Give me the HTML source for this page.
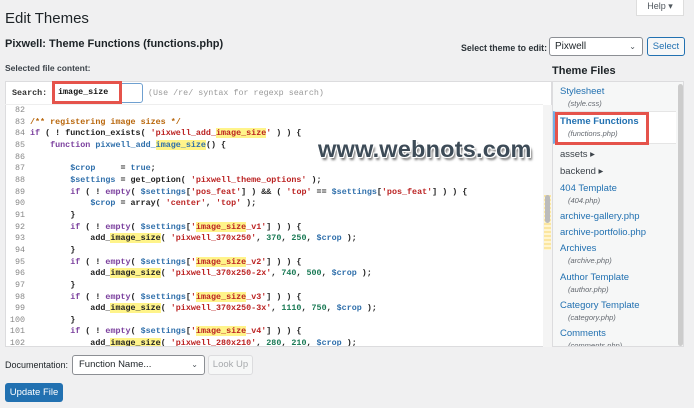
<!DOCTYPE html>
<html><head><meta charset="utf-8"><style>
*{margin:0;padding:0;box-sizing:border-box}
body{width:694px;height:408px;background:#f0f0f1;font-family:"Liberation Sans",sans-serif;color:#1d2327;position:relative;overflow:hidden}
.a{position:absolute;white-space:nowrap}
.code{font-family:"Liberation Mono",monospace;font-size:8.4px;font-weight:bold;line-height:11.65px}
pre.code{white-space:pre}
.ln{color:#888;font-weight:normal;text-align:right;width:20px}
.k{color:#7a3e9d}.c{color:#b8660b}.s{color:#b22}.v{color:#2f6fab}.n{color:#1a7a55}.f{color:#2f6fab}.h{background:#fff48a}
.fl{color:#2271b1;font-size:9.5px}
.fn{color:#646970;font-size:7.5px;font-style:italic}
</style></head><body>
<div class="a" style="left:636px;top:-2px;width:48px;height:18px;background:#fff;border:1px solid #ddd;border-top:none;font-size:9px;color:#50575e;text-align:center;line-height:16px">Help ▾</div>
<div class="a" style="left:5px;top:10px;font-size:15px;color:#1d2327">Edit Themes</div>
<div class="a" style="left:5px;top:38px;font-size:11px;font-weight:bold">Pixwell: Theme Functions (functions.php)</div>
<div class="a" style="left:5px;top:63px;font-size:8.5px;font-weight:bold;color:#3c434a">Selected file content:</div>
<div class="a" style="left:461px;top:43px;font-size:8.8px;font-weight:bold;color:#2c3338">Select theme to edit:</div>
<div class="a" style="left:549px;top:37px;width:94px;height:19px;background:#fff;border:1px solid #8c8f94;border-radius:3px;font-size:10px;line-height:17px;padding-left:5px">Pixwell<span style="position:absolute;right:6px;color:#50575e;font-size:8px">⌄</span></div>
<div class="a" style="left:647px;top:37px;width:38px;height:19px;background:#f6f7f7;border:1px solid #2271b1;border-radius:3px;font-size:9.5px;color:#2271b1;text-align:center;line-height:17px">Select</div>
<div class="a" style="left:552px;top:65px;font-size:11px;font-weight:bold;color:#1d2327">Theme Files</div>

<div class="a" style="left:5px;top:81px;width:547px;height:266px;background:#fff;border:1px solid #dcdcde"></div>
<div class="a" style="left:5px;top:104px;width:538px;height:1px;background:#eee"></div>
<div class="a code" style="left:12px;top:88px;color:#333">Search:</div>
<div class="a" style="left:52px;top:83px;width:91px;height:20px;border:1px solid #6fa0d0;border-radius:3px;background:#fff"></div>
<div class="a" style="left:52px;top:81px;width:70px;height:23px;border:3px solid #e5534b"></div>
<div class="a code" style="left:58px;top:87px;color:#111">image_size</div>
<div class="a code" style="left:148px;top:88px;color:#999;font-weight:normal">(Use /re/ syntax for regexp search)</div>
<div class="a" style="left:543px;top:105px;width:9px;height:242px;background:#f4f4f4"></div>
<div class="a" style="left:544px;top:195px;width:7px;height:55px;background:repeating-linear-gradient(#fbe6a0 0 2px,#fff5d0 2px 4px)"></div>
<div class="a" style="left:545px;top:195px;width:5px;height:28px;background:#bbb;border-radius:3px"></div>

<div class="a code" style="left:5px;top:105px">
<div class="ln">82<br>83<br>84<br>85<br>86<br>87<br>88<br>89<br>90<br>91<br>92<br>93<br>94<br>95<br>96<br>97<br>98<br>99<br>100<br>101<br>102</div>
</div>
<div class="a" style="left:30px;top:105px;width:512px;height:241px;overflow:hidden">
<pre class="code" style="color:#222">&#32;
<span class="c">/** registering image sizes */</span>
<span class="k">if</span> ( ! function_exists( <span class="s">'pixwell_add_<span class="h">image_size</span>'</span> ) ) {
    <span class="k">function</span> <span class="f">pixwell_add_<span class="h">image_size</span></span>() {

        <span class="v">$crop</span>     = <span class="v">true</span>;
        <span class="v">$settings</span> = get_option( <span class="s">'pixwell_theme_options'</span> );
        <span class="k">if</span> ( ! <span class="k">empty</span>( <span class="v">$settings</span>[<span class="s">'pos_feat'</span>] ) &amp;&amp; ( <span class="s">'top'</span> == <span class="v">$settings</span>[<span class="s">'pos_feat'</span>] ) ) {
            <span class="v">$crop</span> = array( <span class="s">'center'</span>, <span class="s">'top'</span> );
        }
        <span class="k">if</span> ( ! <span class="k">empty</span>( <span class="v">$settings</span>[<span class="s">'<span class="h">image_size</span>_v1'</span>] ) ) {
            add_<span class="h">image_size</span>( <span class="s">'pixwell_370x250'</span>, <span class="n">370</span>, <span class="n">250</span>, <span class="v">$crop</span> );
        }
        <span class="k">if</span> ( ! <span class="k">empty</span>( <span class="v">$settings</span>[<span class="s">'<span class="h">image_size</span>_v2'</span>] ) ) {
            add_<span class="h">image_size</span>( <span class="s">'pixwell_370x250-2x'</span>, <span class="n">740</span>, <span class="n">500</span>, <span class="v">$crop</span> );
        }
        <span class="k">if</span> ( ! <span class="k">empty</span>( <span class="v">$settings</span>[<span class="s">'<span class="h">image_size</span>_v3'</span>] ) ) {
            add_<span class="h">image_size</span>( <span class="s">'pixwell_370x250-3x'</span>, <span class="n">1110</span>, <span class="n">750</span>, <span class="v">$crop</span> );
        }
        <span class="k">if</span> ( ! <span class="k">empty</span>( <span class="v">$settings</span>[<span class="s">'<span class="h">image_size</span>_v4'</span>] ) ) {
            add_<span class="h">image_size</span>( <span class="s">'pixwell_280x210'</span>, <span class="n">280</span>, <span class="n">210</span>, <span class="v">$crop</span> );</pre>
</div>

<div class="a" style="left:318px;top:136px;font-size:23.5px;font-weight:bold;color:#3d4b57;letter-spacing:0.2px;text-shadow:1px 1px 0 #fff,-1px -1px 0 #fff,1px -1px 0 #fff,-1px 1px 0 #fff,2px 3px 2px #777">www.webnots.com</div>

<div class="a" style="left:552px;top:81px;width:132px;height:266px;background:#f6f7f7;border:1px solid #dcdcde;overflow:hidden">
<div class="a" style="left:125px;top:2px;width:5px;height:262px;background:#ccc;border-radius:3px"></div>
<div class="a" style="left:0;top:29px;width:123px;height:33px;background:#fff;border-left:3px solid #72aee6;border-top:1px solid #e5e5e5;border-bottom:1px solid #e5e5e5"></div>
<div class="a" style="left:2px;top:30px;width:94px;height:33px;border:3px solid #e5534b"></div>
<div class="a fl" style="left:7px;top:4px">Stylesheet</div><div class="a fn" style="left:15px;top:17px">(style.css)</div>
<div class="a fl" style="left:7px;top:34px;font-weight:bold">Theme Functions</div><div class="a fn" style="left:15px;top:47px">(functions.php)</div>
<div class="a" style="left:7px;top:67px;font-size:9.5px;color:#3c434a">assets ▸</div>
<div class="a" style="left:7px;top:84px;font-size:9.5px;color:#3c434a">backend ▸</div>
<div class="a fl" style="left:7px;top:101px">404 Template</div><div class="a fn" style="left:15px;top:114px">(404.php)</div>
<div class="a fl" style="left:7px;top:129px">archive-gallery.php</div>
<div class="a fl" style="left:7px;top:145px">archive-portfolio.php</div>
<div class="a fl" style="left:7px;top:161px">Archives</div><div class="a fn" style="left:15px;top:174px">(archive.php)</div>
<div class="a fl" style="left:7px;top:190px">Author Template</div><div class="a fn" style="left:15px;top:203px">(author.php)</div>
<div class="a fl" style="left:7px;top:218px">Category Template</div><div class="a fn" style="left:15px;top:231px">(category.php)</div>
<div class="a fl" style="left:7px;top:246px">Comments</div><div class="a fn" style="left:15px;top:259px">(comments.php)</div>
</div>

<div class="a" style="left:5px;top:360px;font-size:9px;color:#1d2327">Documentation:</div>
<div class="a" style="left:72px;top:355px;width:133px;height:20px;background:#fff;border:1px solid #8c8f94;border-radius:3px;font-size:9.5px;line-height:18px;padding-left:6px">Function Name...<span style="position:absolute;right:6px;color:#50575e;font-size:8px">⌄</span></div>
<div class="a" style="left:208px;top:355px;width:45px;height:20px;background:#f6f7f7;border:1px solid #dcdcde;border-radius:3px;font-size:9.5px;color:#a7aaad;text-align:center;line-height:18px">Look Up</div>
<div class="a" style="left:5px;top:383px;width:58px;height:19px;background:#2271b1;border-radius:3px;font-size:9.5px;color:#fff;text-align:center;line-height:19px">Update File</div>
</body></html>
